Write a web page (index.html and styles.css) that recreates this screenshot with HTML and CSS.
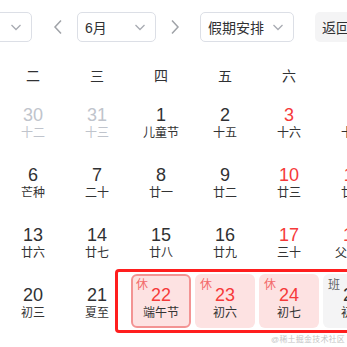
FILE: index.html
```html
<!DOCTYPE html>
<html>
<head>
    <title>万年历</title>
    <meta charset="utf-8">
    <meta name="viewport" content="width=device-width, initial-scale=1.0">
    <link rel="stylesheet" href="styles.css">
</head>
<body>
    <div class="toolbar">
        <div class="select select-year">
            <span class="select-text">2023年</span>
            <svg class="select-caret" viewBox="0 0 12 12" width="12" height="12"><path d="M1.5 4 L6 8.5 L10.5 4" fill="none" stroke="#a8abb2" stroke-width="1.3"/></svg>
        </div>
        <span class="arrow arrow-prev">
            <svg viewBox="0 0 10 16" width="10" height="16"><path d="M8 1.5 L2 8 L8 14.5" fill="none" stroke="#a0a3a8" stroke-width="1.5"/></svg>
        </span>
        <div class="select select-month">
            <span class="select-text">6月</span>
            <svg class="select-caret" viewBox="0 0 12 12" width="12" height="12"><path d="M1.5 4 L6 8.5 L10.5 4" fill="none" stroke="#a8abb2" stroke-width="1.3"/></svg>
        </div>
        <span class="arrow arrow-next">
            <svg viewBox="0 0 10 16" width="10" height="16"><path d="M2 1.5 L8 8 L2 14.5" fill="none" stroke="#a0a3a8" stroke-width="1.5"/></svg>
        </span>
        <div class="select select-holiday">
            <span class="select-text">假期安排</span>
            <svg class="select-caret" viewBox="0 0 12 12" width="12" height="12"><path d="M1.5 4 L6 8.5 L10.5 4" fill="none" stroke="#a8abb2" stroke-width="1.3"/></svg>
        </div>
        <button class="btn-today">返回今天</button>
    </div>

    <div class="calendar">
        <div class="weekdays">
            <span>一</span><span>二</span><span>三</span><span>四</span><span>五</span><span>六</span><span>日</span>
        </div>
        <div class="days">
            <div class="day other"><div class="num">29</div><div class="lunar">十一</div></div>
            <div class="day other"><div class="num">30</div><div class="lunar">十二</div></div>
            <div class="day other"><div class="num">31</div><div class="lunar">十三</div></div>
            <div class="day"><div class="num">1</div><div class="lunar">儿童节</div></div>
            <div class="day"><div class="num">2</div><div class="lunar">十五</div></div>
            <div class="day weekend"><div class="num">3</div><div class="lunar">十六</div></div>
            <div class="day weekend"><div class="num">4</div><div class="lunar">十七</div></div>

            <div class="day"><div class="num">5</div><div class="lunar">十八</div></div>
            <div class="day"><div class="num">6</div><div class="lunar">芒种</div></div>
            <div class="day"><div class="num">7</div><div class="lunar">二十</div></div>
            <div class="day"><div class="num">8</div><div class="lunar">廿一</div></div>
            <div class="day"><div class="num">9</div><div class="lunar">廿二</div></div>
            <div class="day weekend"><div class="num">10</div><div class="lunar">廿三</div></div>
            <div class="day weekend"><div class="num">11</div><div class="lunar">廿四</div></div>

            <div class="day"><div class="num">12</div><div class="lunar">廿五</div></div>
            <div class="day"><div class="num">13</div><div class="lunar">廿六</div></div>
            <div class="day"><div class="num">14</div><div class="lunar">廿七</div></div>
            <div class="day"><div class="num">15</div><div class="lunar">廿八</div></div>
            <div class="day"><div class="num">16</div><div class="lunar">廿九</div></div>
            <div class="day weekend"><div class="num">17</div><div class="lunar">三十</div></div>
            <div class="day weekend"><div class="num">18</div><div class="lunar">父亲节</div></div>

            <div class="day"><div class="num">19</div><div class="lunar">初二</div></div>
            <div class="day"><div class="num">20</div><div class="lunar">初三</div></div>
            <div class="day"><div class="num">21</div><div class="lunar">夏至</div></div>
            <div class="day rest selected"><span class="tag">休</span><div class="num">22</div><div class="lunar">端午节</div></div>
            <div class="day rest"><span class="tag">休</span><div class="num">23</div><div class="lunar">初六</div></div>
            <div class="day rest"><span class="tag">休</span><div class="num">24</div><div class="lunar">初七</div></div>
            <div class="day work"><span class="tag">班</span><div class="num">25</div><div class="lunar">初八</div></div>
        </div>
        <div class="highlight"></div>
    </div>

    <div class="watermark">@稀土掘金技术社区</div>
</body>
</html>
```

FILE: styles.css
```css
:root {
    --text-color: #303133;
    --muted-color: #c0c4cc;
    --red-color: #f63a3a;
    --border-color: #dcdfe6;
}

html, body {
    margin: 0;
    padding: 0;
    width: 347px;
    height: 347px;
    overflow: hidden;
    background: #fff;
    font-family: "Liberation Sans", "Noto Sans CJK SC", sans-serif;
    color: var(--text-color);
    position: relative;
}

/* toolbar */

.toolbar {
    display: flex;
    align-items: center;
    margin-left: -80px;
    padding-top: 12px;
    height: 30px;
    white-space: nowrap;
}

.select {
    box-sizing: border-box;
    height: 30px;
    display: flex;
    align-items: center;
    justify-content: space-between;
    padding: 0 9px 0 7px;
    border: 1px solid var(--border-color);
    border-radius: 5px;
    font-size: 14px;
    flex-shrink: 0;
}

.select-year { width: 112px; }
.select-month { width: 79px; }
.select-holiday { width: 94px; }

.select-caret {
    display: block;
}

.arrow {
    display: flex;
    align-items: center;
    justify-content: center;
    width: 16px;
    height: 30px;
    flex-shrink: 0;
}

.arrow-prev { margin: 0 11px 0 18px; }
.arrow-next { margin: 0 17px 0 11px; }

.btn-today {
    flex-shrink: 0;
    margin-left: 21px;
    height: 30px;
    padding: 0 7px;
    border: none;
    border-radius: 5px;
    background: #f4f4f5;
    font-family: inherit;
    font-size: 14px;
    color: var(--text-color);
}

/* calendar */

.calendar {
    position: relative;
    width: 448px;
    margin-left: -63px;
    margin-top: 19px;
}

.weekdays {
    display: grid;
    grid-template-columns: repeat(7, 64px);
    height: 30px;
    line-height: 30px;
    text-align: center;
    font-size: 14px;
}

.days {
    display: grid;
    grid-template-columns: repeat(7, 64px);
    grid-auto-rows: 60px;
}

.day {
    position: relative;
    box-sizing: border-box;
    margin: 3px 2px;
    padding-top: 10px;
    border-radius: 6px;
    text-align: center;
}

.num {
    font-size: 18px;
    line-height: 22px;
}

.lunar {
    font-size: 12px;
    line-height: 14px;
    color: #333;
}

.other .num,
.other .lunar {
    color: var(--muted-color);
}

.weekend .num,
.rest .num {
    color: var(--red-color);
}

.rest {
    background: #fde2e2;
}

.selected {
    border: 2px solid #f39393;
    padding-top: 8px;
}

.work {
    background: #f4f4f5;
}

.tag {
    position: absolute;
    top: 4px;
    left: 5px;
    font-size: 12px;
    line-height: 14px;
    color: #f36a6a;
}

.selected .tag {
    top: 2px;
    left: 3px;
}

.work .tag {
    color: #606266;
}

.highlight {
    position: absolute;
    left: 178px;
    top: 208px;
    width: 300px;
    height: 58px;
    border: 3px solid #ff1e1e;
    border-radius: 4px;
    pointer-events: none;
}

.watermark {
    position: absolute;
    right: 2px;
    bottom: 3px;
    font-size: 8px;
    line-height: 9px;
    color: #c4c4c4;
    letter-spacing: 0.2px;
}
```
